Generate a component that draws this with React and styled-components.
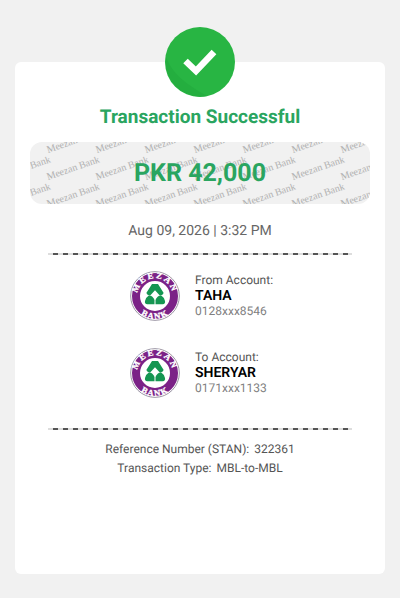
import React from 'react'
import styled, { createGlobalStyle } from 'styled-components'

const GlobalStyle = createGlobalStyle`
  * {
    box-sizing: border-box;
  }
  body {
    margin: 0;
    background: #f1f1f1;
    font-family: Roboto, "Liberation Sans", sans-serif;
    text-rendering: geometricPrecision;
  }
`

const Page = styled.main`
  display: flex;
  justify-content: center;
  min-height: 100vh;
  padding: 62px 15px 24px;
`

const Card = styled.section`
  display: flex;
  flex-direction: column;
  align-items: center;
  flex-grow: 1;
  min-width: 0;
  max-width: 480px;
  padding: 0 15px 24px;
  background: #fff;
  border-radius: 6px;
`

const StatusIcon = styled.svg`
  display: block;
  width: 70px;
  height: 70px;
  margin-top: -35px;
`

const Title = styled.h1`
  margin: 8px 0 13px;
  color: #2aa560;
  font-size: 19px;
  font-weight: 700;
  line-height: 24px;
`

const AmountBox = styled.div`
  position: relative;
  display: flex;
  align-items: center;
  justify-content: center;
  align-self: stretch;
  height: 62px;
  padding-top: 2px;
  overflow: hidden;
  background: #f1f1f1;
  border-radius: 12px;
`

const Watermark = styled.svg`
  position: absolute;
  inset: 0;
  width: 100%;
  height: 100%;
  fill: #b0b0b0;
  font-family: "Liberation Serif", serif;
  font-size: 10px;
`

const Amount = styled.strong`
  position: relative;
  color: #2aa560;
  font-size: 25px;
  font-weight: 700;
  line-height: 32px;
`

const DateLine = styled.time`
  margin: 17px 0 12px;
  color: #666;
  font-size: 14px;
  font-weight: 400;
  line-height: 20px;
`

const Divider = styled.hr`
  align-self: stretch;
  height: 2px;
  margin: 0 18px;
  border: 0;
  background: repeating-linear-gradient(90deg, #ddd 0 5px, #555 5px 10px);
`

const Accounts = styled.div`
  display: flex;
  flex-direction: column;
  gap: 27px;
  padding: 16px 0 30px;
`

const AccountRow = styled.div`
  display: flex;
  align-items: center;
  gap: 15px;
  width: 140px;
`

const Logo = styled.svg`
  flex-shrink: 0;
  width: 50px;
  height: 50px;
`

const AccountText = styled.div`
  display: flex;
  flex-direction: column;
  white-space: nowrap;
`

const Label = styled.span`
  color: #555;
  font-size: 12px;
  line-height: 15px;
`

const Name = styled.span`
  color: #000;
  font-size: 14px;
  font-weight: 600;
  line-height: 16px;
`

const Number = styled.span`
  color: #808080;
  font-size: 12px;
  line-height: 15px;
`

const Details = styled.dl`
  display: flex;
  flex-direction: column;
  align-items: center;
  gap: 3px;
  margin: 11px 0 0;
  color: #555;
  font-size: 12px;
  line-height: 16px;
`

const Detail = styled.div`
  display: flex;
  gap: 5px;
  dt, dd {
    margin: 0;
  }
`

const accounts = [
  { label: 'From Account:', name: 'TAHA', number: '0128xxx8546' },
  { label: 'To Account:', name: 'SHERYAR', number: '0171xxx1133' },
]

const details = [
  { label: 'Reference Number (STAN):', value: '322361' },
  { label: 'Transaction Type:', value: 'MBL-to-MBL' },
]

const SuccessIcon = () => (
  <StatusIcon viewBox="0 0 70 70" role="img" aria-label="Success">
    <circle cx="35" cy="35" r="35" fill="#28b543" />
    <path d="M1 30C7 46 20 57 42 69A35 35 0 0 1 1 30Z" fill="#24ae3f" />
    <path d="M20.500 34L31 44L49 25" fill="none" stroke="#fff" strokeWidth="6.500" />
  </StatusIcon>
)

const BankLogo = ({ id }) => (
  <Logo viewBox="0 0 150 150" role="img" aria-label="Meezan Bank">
    <defs>
      <path id={`${id}-top`} d="M26 95A53 53 0 1 1 124 95" />
      <path id={`${id}-bottom`} d="M6 75A69 69 0 0 0 144 75" />
    </defs>
    <circle cx="75" cy="75" r="73" fill="#fff" stroke="#9a94a3" strokeWidth="3" />
    <circle cx="75" cy="75" r="57" fill="none" stroke="#7b2287" strokeWidth="24" />
    <g fill="#fff" stroke="#fff" fontFamily="Liberation Serif, serif" fontSize="26" fontWeight="700" textAnchor="middle">
      <text>
        <textPath href={`#${id}-top`} startOffset="50%" letterSpacing="6">MEEZAN</textPath>
      </text>
      <text>
        <textPath href={`#${id}-bottom`} startOffset="50%" letterSpacing="4">BANK</textPath>
      </text>
    </g>
    <g fill="#159652">
      <path d="M66 39H84L101 66Q97 75 88 72L75 58L62 72Q53 75 49 66Z" />
      <path d="M57 73Q69 75 73.500 87V100H52Q43 99 45 90Q49 78 57 73Z" />
      <path d="M93 73Q81 75 76.500 87V100H98Q107 99 105 90Q101 78 93 73Z" />
    </g>
  </Logo>
)

const WatermarkPattern = () => {
  const marks = []
  for (let row = 0; row < 3; row++) {
    for (let col = 0; col < 10; col++) {
      const x = col * 49 - 31
      const y = row * 27 + 11
      marks.push(
        <text key={`${row}-${col}`} transform={`translate(${x} ${y}) rotate(-19)`}>Meezan Bank</text>
      )
    }
  }
  return <Watermark aria-hidden="true">{marks}</Watermark>
}

const Account = ({ id, label, name, number }) => (
  <AccountRow>
    <BankLogo id={id} />
    <AccountText>
      <Label>{label}</Label>
      <Name>{name}</Name>
      <Number>{number}</Number>
    </AccountText>
  </AccountRow>
)

const App = () => (
  <>
    <GlobalStyle />
    <Page>
      <Card>
        <SuccessIcon />
        <Title>Transaction Successful</Title>
        <AmountBox>
          <WatermarkPattern />
          <Amount>PKR 42,000</Amount>
        </AmountBox>
        <DateLine dateTime="2026-08-09T15:32">Aug 09, 2026 | 3:32 PM</DateLine>
        <Divider />
        <Accounts>
          {accounts.map((account, i) => (
            <Account key={account.number} id={`logo-${i}`} {...account} />
          ))}
        </Accounts>
        <Divider />
        <Details>
          {details.map(({ label, value }) => (
            <Detail key={label}>
              <dt>{label}</dt>
              <dd>{value}</dd>
            </Detail>
          ))}
        </Details>
      </Card>
    </Page>
  </>
)

export default App
